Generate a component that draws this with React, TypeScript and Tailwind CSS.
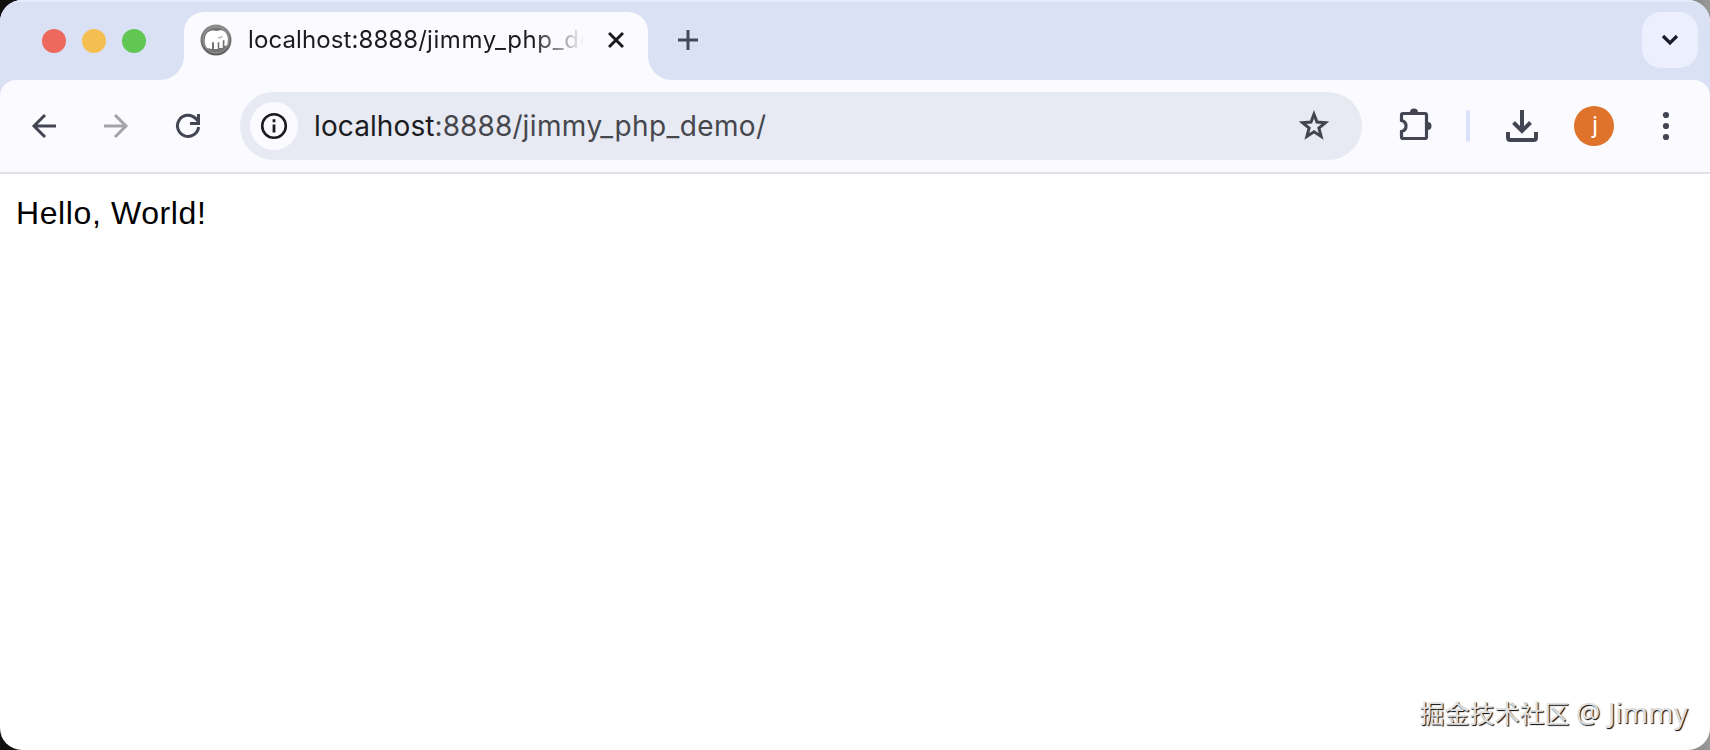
import type { ReactNode } from "react";

function TrafficLights() {
    return (
        <div className="flex gap-4 pl-[42px] pt-[29px]">
            <span className="size-6 rounded-full bg-[#ed695e]" />
            <span className="size-6 rounded-full bg-[#f4bf50]" />
            <span className="size-6 rounded-full bg-[#61c654]" />
        </div>
    );
}

function Favicon() {
    return (
        <svg viewBox="0 0 32 32" className="size-8 shrink-0">
            <defs>
                <linearGradient id="ring" x1="0" y1="0" x2="0" y2="1">
                    <stop offset="0" stopColor="#8c8c8c" />
                    <stop offset="1" stopColor="#5c5c5c" />
                </linearGradient>
            </defs>
            <circle cx="16" cy="16" r="15.500" fill="url(#ring)" />
            <circle cx="16" cy="16" r="13" fill="#747474" stroke="#a0a0a0" strokeWidth="0.800" />
            <path
                d="M7 24C3.800 20 4 12 7.500 8.500 10 6 14 6 17.500 7c2-1.500 5.500-1 7.500 1 3 3 3.600 8 2.300 12.500-.5 1.700-2.800 2-3 .5l.3-4.500c-.8-1-1.800-.8-1.900 1V24h-3.400v-5.500q-.8-1-1.600 0V25H14v-6.500q-1-1-2 0V25z"
                fill="#fff"
            />
            <path d="M18 13.500c1.700.8 3.300.3 4-1.500" stroke="#a5a5a5" strokeWidth="1.200" fill="none" />
        </svg>
    );
}

function Tab() {
    return (
        <div className="flex">
            {/* Flared foot on each side of the tab */}
            <svg viewBox="0 0 24 24" className="size-6 self-end">
                <path d="M24 0v24H0C13 24 24 13 24 0z" fill="#fafaff" />
            </svg>
            <div className="flex h-[68px] w-[464px] items-start rounded-t-[20px] bg-[#fafaff] pl-4 pt-3">
                <Favicon />
                <div className="ml-4 h-8 w-[336px] overflow-hidden whitespace-nowrap font-['Inter',sans-serif] text-[24px] leading-8 tracking-[0.1px] text-[#1b1b21] [mask-image:linear-gradient(to_right,#000_285px,transparent_336px)]">
                    localhost:8888/<span className="tracking-[0.6px]">jimmy_php_demo/</span>
                </div>
                <svg viewBox="0 0 16 16" className="ml-6 mt-2 size-4 shrink-0">
                    <path d="M1 1l14 14M15 1L1 15" stroke="#1b1b21" strokeWidth="3" />
                </svg>
            </div>
            <svg viewBox="0 0 24 24" className="size-6 self-end">
                <path d="M0 0v24h24C11 24 0 13 0 0z" fill="#fafaff" />
            </svg>
        </div>
    );
}

function TabStrip() {
    return (
        <div className="flex h-20 border-t-2 border-[#e4edfd] bg-[#dae1f4]">
            <div className="-mt-0.5 w-40">
                <TrafficLights />
            </div>
            <div className="flex pt-2.5">
                <Tab />
                <svg viewBox="0 0 20 20" className="ml-1.5 mt-[18px] size-5">
                    <path d="M10 0v20M0 10h20" stroke="#454958" strokeWidth="3" />
                </svg>
            </div>
            <div className="ml-auto mr-3 mt-2.5 flex size-14 items-center justify-center rounded-[19px] bg-[#ebeffe]">
                <svg viewBox="0 0 18 12" className="h-3 w-[18px]">
                    <path d="M2 2l7 7 7-7" stroke="#1b1b28" strokeWidth="3.200" fill="none" />
                </svg>
            </div>
        </div>
    );
}

function Icon({ className = "", children }: { className?: string; children: ReactNode }) {
    return (
        <svg viewBox="0 0 40 40" fill="none" stroke="currentColor" strokeWidth="3" className={`size-10 shrink-0 ${className}`}>
            {children}
        </svg>
    );
}

function AddressBar() {
    return (
        <div className="ml-8 flex h-[68px] w-[1122px] items-center rounded-full bg-[#e7eaf2] pl-2.5 pr-7">
            <div className="flex size-12 items-center justify-center rounded-full bg-[#fafaff]">
                <Icon className="text-[#1b1b21]">
                    <circle cx="20" cy="20" r="11.800" strokeWidth="2.600" />
                    <path d="M20 18.500v8M20 13.300v3" strokeWidth="2.800" />
                </Icon>
            </div>
            <div className="ml-4 grow whitespace-nowrap font-['Inter',sans-serif] text-[28px] leading-[34px] tracking-[0.1px] text-[#45474d]">
                <span className="text-[#1b1b21]">localhost</span>:8888/<span className="tracking-[0.4px]">jimmy_php_demo/</span>
            </div>
            <Icon className="text-[#43454e]">
                <path d="M20 8.300l3 7.800 8.400.6-6.500 5.400 2.200 8.300L20 25.700 12.900 30.400l2.200-8.300-6.500-5.400 8.400-.6z" strokeWidth="3" />
            </Icon>
        </div>
    );
}

function Toolbar() {
    return (
        <div className="bg-[#dae1f4]">
            <div className="flex h-[94px] items-center rounded-t-[16px] border-b-2 border-[#e0e0e8] bg-[#fafaff] pl-6 text-[#434553]">
                <Icon>
                    <path d="M32 20H10M21 9L10 20l11 11" />
                </Icon>
                <Icon className="ml-8 text-[#a3a4ab]">
                    <path d="M8 20h22M19 9l11 11-11 11" />
                </Icon>
                <Icon className="ml-8">
                    <path d="M30.600 21A10.600 10.600 0 1 1 27.600 12.400L30 15" />
                    <path d="M30.500 8v9.500H22" />
                </Icon>
                <AddressBar />
                <Icon className="ml-8">
                    <path d="M9 7.500h22q1.500 0 1.500 1.500v22q0 1.500-1.500 1.500H9q-1.500 0-1.500-1.500v-5.500c6-1.500 6-9.500 0-11V9q0-1.500 1.500-1.500z" strokeWidth="3.200" />
                    <path d="M16 6.500a4 4 0 0 1 8 0zM33.500 16a4 4 0 0 1 0 8z" fill="currentColor" stroke="none" />
                </Icon>
                <span className="ml-8 h-8 w-1 rounded-full bg-[#dbe2fc]" />
                <Icon className="ml-8">
                    <path d="M20 4v21M11.500 16.500L20 25l8.500-8.500M6 26v5.500q0 2.500 2.500 2.500h23q2.500 0 2.500-2.500V26" strokeWidth="4" />
                </Icon>
                <div className="ml-8 flex size-10 items-center justify-center rounded-full bg-[#df732b] pb-0.5 pl-0.5 font-['Roboto',sans-serif] text-[24px] text-white">
                    j
                </div>
                <Icon className="ml-8">
                    <g fill="currentColor" stroke="none">
                        <circle cx="20" cy="9" r="3.100" />
                        <circle cx="20" cy="20" r="3.100" />
                        <circle cx="20" cy="31" r="3.100" />
                    </g>
                </Icon>
            </div>
        </div>
    );
}

export default function App() {
    return (
        <div className="h-[750px] w-[1710px] overflow-hidden bg-gradient-to-r from-[#111] from-90% to-[#999]">
            <div className="flex h-full flex-col overflow-hidden rounded-[22px] bg-white">
                <TabStrip />
                <Toolbar />
                <main className="flex grow flex-col justify-between pb-[21px] pl-4 pr-[22px] pt-5">
                    <p className="font-['Liberation_Sans',sans-serif] text-[32px] leading-[38px] tracking-[0.6px] text-black">Hello, World!</p>
                    <p className="self-end whitespace-nowrap font-['Noto_Sans','Noto_Sans_CJK_SC',sans-serif] text-[25px] leading-8 text-[#e0e0e0] [text-shadow:1px_1px_1px_#000]">
                        掘金技术社区 <span className="text-[27px] tracking-[0.3px]">@ Jimmy</span>
                    </p>
                </main>
            </div>
        </div>
    );
}
